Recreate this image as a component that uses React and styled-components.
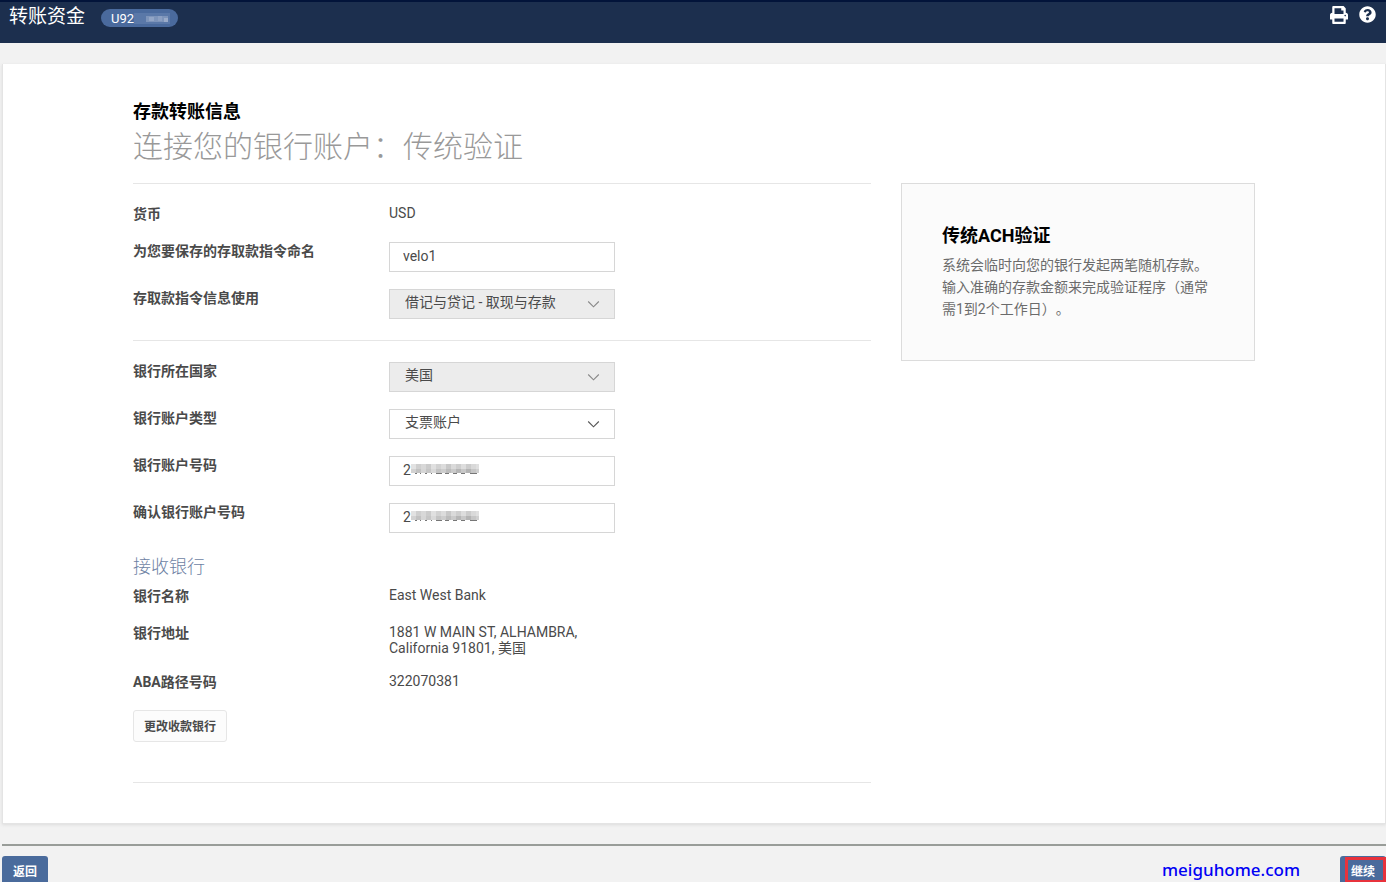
import styled, { createGlobalStyle } from "styled-components";
import { FaPrint, FaQuestionCircle } from "react-icons/fa";

const GlobalStyle = createGlobalStyle`
  * {
    box-sizing: border-box;
  }
  body {
    margin: 0;
    background-color: #f2f2f2;
    color: #4a4a4a;
    font-family: Roboto, "Noto Sans CJK SC", sans-serif;
    font-size: 14px;
    text-spacing-trim: space-all;
  }
  h1, h2, h3, p {
    margin: 0;
  }
  button, input, select {
    font: inherit;
    color: inherit;
  }
`;

const Page = styled.div`
  height: 100vh;
  overflow: hidden;
`;
const Header = styled.header`
  height: 43px;
  padding: 4px 10px 0 9px;
  display: flex;
  align-items: flex-start;
  gap: 16px;
  background-color: #1c2f4e;
  border-top: 2px solid #02143a;
  color: #fff;
`;
const HeaderTitle = styled.h1`
  font-size: 19px;
  font-weight: 400;
  line-height: 22px;
`;
const AccountBadge = styled.span`
  display: flex;
  align-items: center;
  width: 77px;
  height: 18px;
  margin-top: 3px;
  padding-left: 10px;
  border-radius: 9px;
  background-color: #4a6a9d;
  font-size: 13px;
`;
const HeaderActions = styled.div`
  display: flex;
  gap: 11px;
  margin-left: auto;
`;
const IconButton = styled.button`
  display: flex;
  padding: 0;
  border: 0;
  background: none;
  font-size: ${(props) => props.$size}px;
`;
const Panel = styled.main`
  margin: 21px 0 20px 2px;
  padding: 35px 130px 40px;
  background-color: #fff;
  border: 1px solid #e4e4e4;
  border-top: 0;
  box-shadow: 0 1px 3px #dcdcdc;
`;
const Kicker = styled.h2`
  color: #000;
  font-size: 18px;
  font-weight: 700;
  line-height: 26px;
`;
const Heading = styled.h2`
  margin: 2px 0 16px;
  color: #999;
  font-size: 30px;
  font-weight: 300;
  line-height: 40px;
`;
const Columns = styled.div`
  display: grid;
  grid-template-columns: minmax(0, 738fr) minmax(0, 354fr);
  gap: 30px;
  align-items: start;
`;
const Form = styled.form`
  border-top: 1px solid #e6e6e6;
`;
const Section = styled.section`
  display: flex;
  flex-direction: column;
  gap: 17px;
  padding: ${(props) => props.$padding || "21px 0"};
  border-bottom: ${(props) => (props.$last ? "0" : "1px solid #e6e6e6")};
`;
const Row = styled.div`
  display: grid;
  grid-template-columns: 256px 1fr;
  align-items: start;
  min-height: 20px;
`;
const Label = styled.label`
  font-weight: 700;
  line-height: 18px;
`;
const Value = styled.span`
  max-width: 226px;
  line-height: 16px;
`;
const Field = styled.div`
  position: relative;
  width: 226px;
`;
const Input = styled.input`
  display: block;
  width: 100%;
  height: 30px;
  padding: 0 13px 2px;
  border: 1px solid #d6d6d6;
  background-color: #fff;
`;
const Select = styled.select`
  display: block;
  width: 100%;
  height: 30px;
  padding: 0 36px 4px 15px;
  border: 1px solid #d6d6d6;
  border-radius: 0;
  appearance: none;
  background-color: ${(props) => (props.$muted ? "#ececec" : "#fff")};
`;
const Arrow = styled.svg`
  position: absolute;
  right: 15px;
  top: 11px;
  pointer-events: none;
`;
const MaskOverlay = styled.span`
  position: absolute;
  left: 22px;
  top: 8px;
  display: flex;
`;
const SubHeading = styled.h3`
  margin-bottom: -10px;
  color: #6d7fa3;
  font-size: 18px;
  font-weight: 300;
  line-height: 26px;
`;
const OutlineButton = styled.button`
  align-self: flex-start;
  height: 32px;
  padding: 0 10px 2px;
  border: 1px solid #e6e6e6;
  border-radius: 3px;
  background-color: #fcfcfc;
  font-size: 12px;
  font-weight: 700;
`;
const Aside = styled.aside`
  min-height: 178px;
  padding: 39px 40px;
  border: 1px solid #dcdcdc;
  background-color: #fbfbfb;
`;
const AsideTitle = styled.h3`
  color: #000;
  font-size: 18px;
  font-weight: 700;
  line-height: 26px;
`;
const AsideText = styled.p`
  margin-top: 5px;
  color: #6b6b6b;
  line-height: 22px;
`;
const Footer = styled.footer`
  display: flex;
  align-items: flex-start;
  margin-left: 2px;
  padding-top: 10px;
  border-top: 2px solid #999d99;
`;
const SiteLink = styled.a`
  margin: 0 40px 0 auto;
  color: #0000f5;
  font-family: "Noto Sans", sans-serif;
  font-size: 17px;
  font-weight: 500;
  line-height: 28px;
  text-decoration: none;
`;
const FooterButton = styled.button`
  position: relative;
  width: 46px;
  height: 32px;
  padding: 0 0 4px;
  border: 0;
  border-radius: 3px;
  background-color: #4a6b9c;
  color: #fff;
  font-size: 12px;
  font-weight: 700;
`;
const Highlight = styled.span`
  position: absolute;
  inset: 1px 0 5px 5px;
  border: 3px solid #e8323c;
`;

// [upper tile, lower tile] for each column of the account number mask
const MASK = [
  ["#e2e2e2", "#d2d2d2"],
  ["#cfcfcf", "#c2c2c2"],
  ["#d8d8d8", "#d6d6d6"],
  ["#cbcbcb", "#c6c6c6"],
  ["#e0e0e0", "#d9d9d9"],
  ["#d2d2d2", "#c4c4c4"],
  ["#dcdcdc", "#cdcdcd"],
  ["#c8c8c8", "#bcbcbc"],
  ["#dadada", "#cacaca"],
  ["#cecece", "#b6b6b6"],
  ["#dddddd", "#c8c8c8"],
  ["#cccccc", "#b4b4b4"],
  ["#d9d9d9", "#c6c6c6"],
  ["#e0e0e0", "#d0d0d0"],
];

const Mosaic = () => (
  <svg width="68" height="11" aria-hidden="true">
    {MASK.map(([upper, lower], i) => (
      <g key={i}>
        <rect x={i * 5} width="5" height="5" fill={upper} />
        <rect x={i * 5} y="5" width="5" height="4" fill={lower} />
      </g>
    ))}
    <path
      d="M4 9.5h2M9 9.5h1M14 9.5h2M20 9.5h1M25 9.5h6M34 9.5h4M42 9.5h4M50 9.5h4M59 9.5h7"
      stroke="#777"
    />
  </svg>
);

const BadgeMosaic = () => (
  <svg width="36" height="11" aria-hidden="true">
    <rect width="36" height="11" fill="#5a78a8" />
    <rect x="12" y="3" width="22" height="6" fill="#7d94ba" />
    <rect x="15" y="4" width="5" height="4" fill="#92a5c6" />
    <rect x="24" y="3" width="4" height="5" fill="#8b9fc2" />
    <rect x="30" y="5" width="4" height="4" fill="#9aabc9" />
  </svg>
);

const TextRow = ({ label, children }) => (
  <Row>
    <Label as="span">{label}</Label>
    <Value>{children}</Value>
  </Row>
);

const InputRow = ({ id, label, value, masked }) => (
  <Row>
    <Label htmlFor={id}>{label}</Label>
    <Field>
      <Input id={id} type="text" defaultValue={value} />
      {masked && (
        <MaskOverlay>
          <Mosaic />
        </MaskOverlay>
      )}
    </Field>
  </Row>
);

const SelectRow = ({ id, label, value, muted }) => (
  <Row>
    <Label htmlFor={id}>{label}</Label>
    <Field>
      <Select id={id} $muted={muted}>
        <option>{value}</option>
      </Select>
      <Arrow width="13" height="9" viewBox="0 0 13 9" fill="none">
        <path
          d="M1.2 1.5 6.5 6.8l5.3-5.3"
          stroke={muted ? "#888" : "#555"}
          strokeWidth="1.1"
        />
      </Arrow>
    </Field>
  </Row>
);

const App = () => {
  return (
    <Page>
      <GlobalStyle />
      <Header>
        <HeaderTitle>转账资金</HeaderTitle>
        <AccountBadge>
          U92
          <BadgeMosaic />
        </AccountBadge>
        <HeaderActions>
          <IconButton $size={18} type="button" aria-label="打印">
            <FaPrint />
          </IconButton>
          <IconButton $size={17} type="button" aria-label="帮助">
            <FaQuestionCircle />
          </IconButton>
        </HeaderActions>
      </Header>
      <Panel>
        <Kicker>存款转账信息</Kicker>
        <Heading>连接您的银行账户：传统验证</Heading>
        <Columns>
          <Form>
            <Section>
              <TextRow label="货币">USD</TextRow>
              <InputRow id="name" label="为您要保存的存取款指令命名" value="velo1" />
              <SelectRow
                id="usage"
                label="存取款指令信息使用"
                value="借记与贷记 - 取现与存款"
                muted
              />
            </Section>
            <Section $last>
              <SelectRow id="country" label="银行所在国家" value="美国" muted />
              <SelectRow id="type" label="银行账户类型" value="支票账户" />
              <InputRow id="number" label="银行账户号码" value="2" masked />
              <InputRow id="confirm" label="确认银行账户号码" value="2" masked />
            </Section>
            <Section $padding="0 0 40px">
              <SubHeading>接收银行</SubHeading>
              <TextRow label="银行名称">East West Bank</TextRow>
              <TextRow label="银行地址">
                1881 W MAIN ST, ALHAMBRA, California 91801, 美国
              </TextRow>
              <TextRow label="ABA路径号码">322070381</TextRow>
              <OutlineButton type="button">更改收款银行</OutlineButton>
            </Section>
          </Form>
          <Aside>
            <AsideTitle>传统ACH验证</AsideTitle>
            <AsideText>
              系统会临时向您的银行发起两笔随机存款。输入准确的存款金额来完成验证程序（通常需1到2个工作日）。
            </AsideText>
          </Aside>
        </Columns>
      </Panel>
      <Footer>
        <FooterButton type="button">返回</FooterButton>
        <SiteLink href="#">meiguhome.com</SiteLink>
        <FooterButton type="button">
          继续
          <Highlight />
        </FooterButton>
      </Footer>
    </Page>
  );
};

export default App;
